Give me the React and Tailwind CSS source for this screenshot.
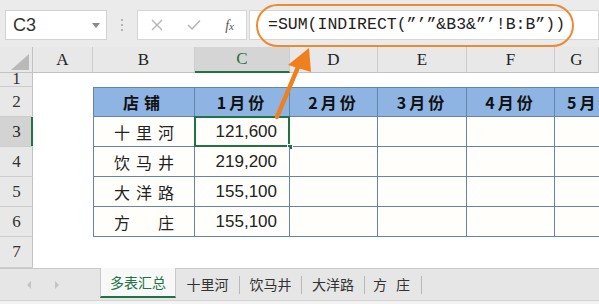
import React from "react";

const serif = { fontFamily: '"Liberation Serif", "Times New Roman", serif' };

const colHeaders = [
  { l: "A" },
  { l: "B" },
  { l: "C", sel: true },
  { l: "D" },
  { l: "E" },
  { l: "F" },
  { l: "G" },
];

const rows = [
  ["十里河", "121,600"],
  ["饮马井", "219,200"],
  ["大洋路", "155,100"],
  ["方　庄", "155,100"],
];

const months = ["1月份", "2月份", "3月份", "4月份", "5月份"];

function RowHead({ n, sel, cls = "" }) {
  return (
    <div
      className={`relative flex items-center justify-center border-b border-[#cdcdcd] text-[17px] ${
        sel ? "bg-[#d3d3d3] text-[#222]" : "bg-[#e8e8e8] text-[#333]"
      } ${cls}`}
      style={serif}
    >
      {n}
      <div className={`absolute right-0 top-0 bottom-0 ${sel ? "w-[2px] bg-[#217346]" : "w-px bg-[#c2c2c2]"}`} />
    </div>
  );
}

export default function App() {
  return (
    <div
      className="relative w-[599px] h-[304px] overflow-hidden bg-white"
      style={{ fontFamily: '"Liberation Sans", Arial, "Noto Sans CJK SC", sans-serif' }}
    >
      {/* toolbar */}
      <div className="h-[47px] bg-[#ebebeb] flex items-start pt-[10px] pl-[5px]">
        <div className="w-[102px] h-[30px] bg-white border border-[#d2d2d2] flex items-center justify-between pl-[7px] pr-[6px]">
          <span className="text-[18px] text-[#333] leading-none">C3</span>
          <span className="w-0 h-0 border-l-[4px] border-r-[4px] border-t-[5px] border-l-transparent border-r-transparent border-t-[#8a8a8a]" />
        </div>
        <div className="w-[30px] h-[30px] flex flex-col items-center justify-center gap-[3px]">
          <span className="w-[2px] h-[2px] bg-[#b5b5b5]" />
          <span className="w-[2px] h-[2px] bg-[#b5b5b5]" />
          <span className="w-[2px] h-[2px] bg-[#b5b5b5]" />
        </div>
        <div className="w-[110px] h-[30px] bg-white border border-[#d6d6d6] flex items-center justify-between pl-[13px] pr-[12px]">
          <svg width="12" height="12" viewBox="0 0 12 12">
            <path d="M1 1L11 11M11 1L1 11" stroke="#b4b4b4" strokeWidth="1.4" />
          </svg>
          <svg width="14" height="12" viewBox="0 0 14 12">
            <path d="M1 6L5 10L13 1.5" stroke="#b4b4b4" strokeWidth="1.5" fill="none" />
          </svg>
          <span className="text-[14px] italic text-[#555]" style={serif}>
            f<span className="text-[11px]">x</span>
          </span>
        </div>
        <div className="ml-[2px] flex-1 h-[30px] bg-white border border-[#d6d6d6] flex items-center pl-[18px]">
          <span
            className="text-[16.5px] text-[#222] whitespace-pre"
            style={{ fontFamily: '"Liberation Mono", "Courier New", monospace' }}
          >
            =SUM(INDIRECT(”’”&B3&”’!B:B”))
          </span>
        </div>
      </div>

      {/* sheet */}
      <div className="grid grid-cols-[33px_60px_102px_95px_88px_89px_88px_1fr] grid-rows-[26px_14px_30px_30px_30px_30px_30px_31px]">
        {/* header row */}
        <div className="relative bg-[#e8e8e8] border-b border-[#c2c2c2] border-r border-r-[#c2c2c2]">
          <svg className="absolute right-[3px] bottom-[2px]" width="18" height="16" viewBox="0 0 18 16">
            <path d="M18 0L18 16L0 16Z" fill="#b9b9b9" />
          </svg>
        </div>
        {colHeaders.map((c) => (
          <div
            key={c.l}
            className={`flex items-center justify-center text-[17px] border-r border-[#cdcdcd] ${
              c.sel
                ? "bg-[#d5d5d5] text-[#217346] border-b-2 border-b-[#217346]"
                : "bg-[#e8e8e8] text-[#222] border-b border-b-[#c2c2c2]"
            }`}
            style={serif}
          >
            {c.l}
          </div>
        ))}

        {/* row 1 */}
        <div className="relative overflow-hidden bg-[#e8e8e8] border-b border-[#cdcdcd]">
          <div className="h-[30px] -mt-[9px] flex items-center justify-center text-[17px] text-[#333]" style={serif}>
            1
          </div>
          <div className="absolute right-0 top-0 bottom-0 w-px bg-[#c2c2c2]" />
        </div>
        <div className="col-span-7" />

        {/* row 2 */}
        <RowHead n="2" />
        <div />
        <div className="flex items-center justify-center bg-[#8eb4e3] border border-[#6384ad] font-bold text-[16px] tracking-[5px] text-[#111]" style={{ fontFamily: '"Noto Sans CJK SC", sans-serif' }}>
          店铺
        </div>
        {months.map((m, i) => (
          <div
            key={m}
            className={`flex items-center justify-center bg-[#8eb4e3] border-t border-b border-r border-[#6384ad] font-bold text-[16px] tracking-[3px] text-[#111] whitespace-nowrap overflow-hidden ${
              i === 4 ? "justify-start pl-[12px] border-r-0" : ""
            }`}
            style={{ fontFamily: '"Noto Sans CJK SC", sans-serif' }}
          >
            {m}
          </div>
        ))}

        {rows.map((r, ri) => (
          <React.Fragment key={ri}>
            <RowHead n={String(ri + 3)} sel={ri === 0} />
            <div />
            <div
              className="flex items-center justify-center bg-[#fffefb] border-l border-r border-b border-[#6384ad] text-[16px] tracking-[6px] pl-[6px] text-[#222]"
              style={{ fontFamily: '"Noto Sans CJK SC", sans-serif' }}
            >
              {r[0]}
            </div>
            <div className="relative flex items-center justify-end pr-[12px] bg-[#fffefb] border-r border-b border-[#6384ad] text-[17px] text-[#222]">
              {r[1]}
              {ri === 0 && (
                <>
                  <div className="absolute -left-px -top-px -right-px -bottom-px border-2 border-[#217346]" />
                  <div className="absolute -right-[4px] -bottom-[4px] w-[6px] h-[6px] bg-[#217346] border border-white" />
                </>
              )}
            </div>
            <div className="bg-[#fffefb] border-r border-b border-[#6384ad]" />
            <div className="bg-[#fffefb] border-r border-b border-[#6384ad]" />
            <div className="bg-[#fffefb] border-r border-b border-[#6384ad]" />
            <div className="bg-[#fffefb] border-b border-[#6384ad]" />
          </React.Fragment>
        ))}

        {/* row 7 */}
        <RowHead n="7" />
        <div className="col-span-7" />
      </div>

      {/* tab bar */}
      <div className="h-[32px] bg-[#e6e6e6] border-t border-[#c8c8c8] flex items-stretch text-[14px] text-[#333]" style={{ fontFamily: '"Noto Sans CJK SC", sans-serif' }}>
        <div className="w-[100px] flex items-center pl-[27px] gap-[24px]">
          <span className="w-0 h-0 border-t-[4px] border-b-[4px] border-r-[4px] border-t-transparent border-b-transparent border-r-[#c4c4c4]" />
          <span className="w-0 h-0 border-t-[4px] border-b-[4px] border-l-[4px] border-t-transparent border-b-transparent border-l-[#c4c4c4]" />
        </div>
        <div className="-mt-px w-[76px] h-[30px] bg-[#f8f8f8] border-l border-r border-[#c8c8c8] border-b-2 border-b-[#217346] flex items-center justify-center text-[#217346]">
          多表汇总
        </div>
        <div className="w-[64px] flex items-center justify-center">
          <span className="flex-1 text-center">十里河</span>
          <span className="w-px h-[18px] bg-[#b8b8b8]" />
        </div>
        <div className="w-[62px] flex items-center justify-center">
          <span className="flex-1 text-center">饮马井</span>
          <span className="w-px h-[18px] bg-[#b8b8b8]" />
        </div>
        <div className="w-[63px] flex items-center justify-center">
          <span className="flex-1 text-center">大洋路</span>
          <span className="w-px h-[18px] bg-[#b8b8b8]" />
        </div>
        <div className="w-[57px] flex items-center justify-center">
          <span className="flex-1 text-center tracking-[3px]">方 庄</span>
          <span className="w-px h-[18px] bg-[#b8b8b8]" />
        </div>
      </div>
      <div className="h-[5px] bg-[#f3f3f3] border-t border-[#d4d4d4]" />

      {/* orange annotation */}
      <div className="absolute left-[256px] top-[4px] w-[318px] h-[43px] rounded-[22px] border-2 border-[#ee8a32] pointer-events-none" />
      <svg className="absolute left-0 top-0 pointer-events-none" width="599" height="304" viewBox="0 0 599 304">
        <path d="M277 117L301 60" stroke="#f07f1e" strokeWidth="4.5" strokeLinecap="round" />
        <path d="M309 48L288 65L311 72Z" fill="#f07f1e" />
      </svg>
    </div>
  );
}
